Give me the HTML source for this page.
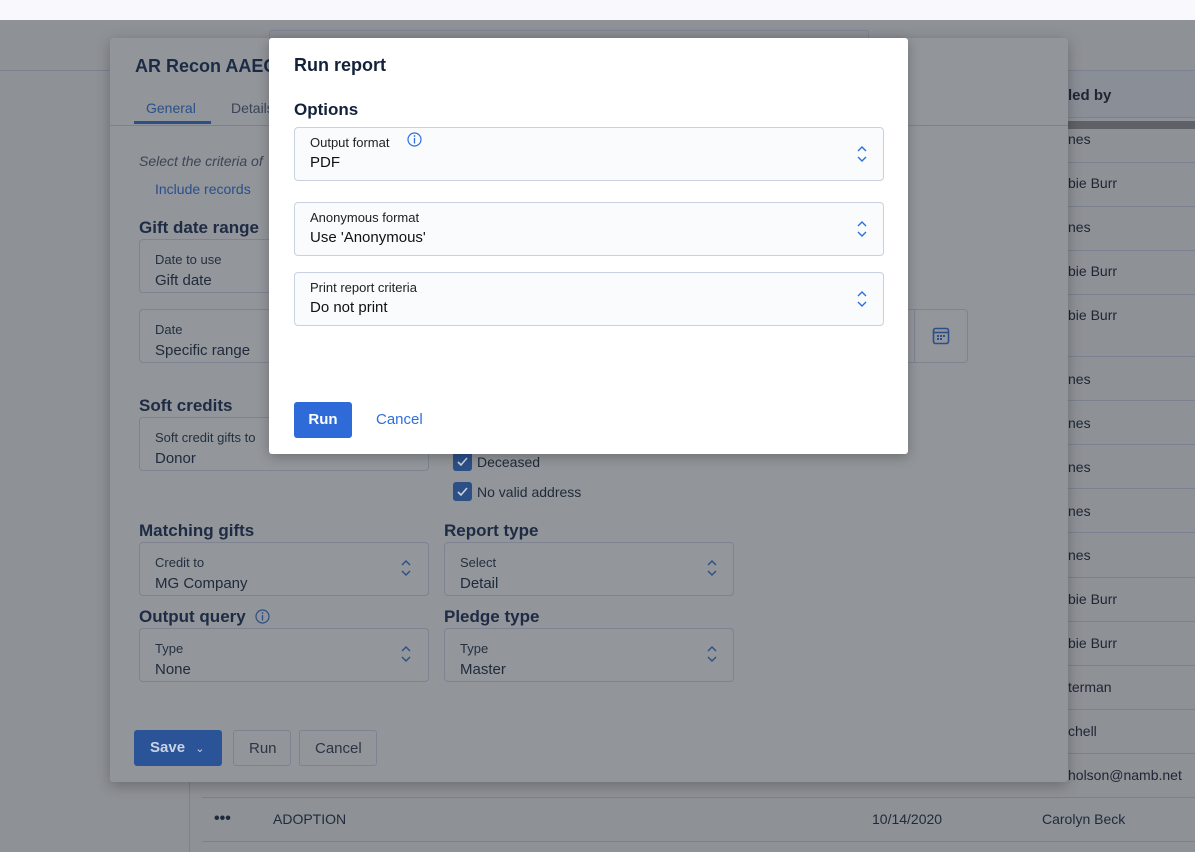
<!DOCTYPE html>
<html><head><meta charset="utf-8"><style>
*{box-sizing:border-box;margin:0;padding:0}
body{width:1195px;height:852px;overflow:hidden;background:#8e9196;font-family:"Liberation Sans",sans-serif;position:relative;color:#1f2a3a}
.a{position:absolute}
.top{left:0;top:0;width:1195px;height:20px;background:#f8f8fd}
.hl{height:1px;background:#7b8190}
.panel{left:110px;top:38px;width:958px;height:744px;background:#929599;border-radius:3px;box-shadow:0 4px 14px rgba(0,0,0,.25)}
.fld{position:absolute;border:1px solid #7d8391;border-radius:4px;background:#93969b}
.fld .l{position:absolute;left:15px;top:12px;font-size:13px;color:#24303f}
.fld .v{position:absolute;left:15px;top:32px;font-size:15px;color:#1f2a3a}
.h{position:absolute;font-size:17px;font-weight:bold;color:#1e2b44}
.chev{position:absolute;width:12px;height:18px}
.cb{position:absolute;width:19px;height:19px;background:#2c4f86;border-radius:3px}
.mod{left:269px;top:38px;width:639px;height:416px;background:#fff;border-radius:3px;box-shadow:0 3px 12px rgba(0,0,0,.25)}
.mf{position:absolute;left:25px;width:590px;height:54px;border:1px solid #c9d0df;border-radius:4px;background:#fafbfd}
.mf .l{position:absolute;left:15px;top:7px;font-size:13px;color:#222}
.mf .v{position:absolute;left:15px;top:26px;font-size:15px;color:#111}
.row{position:absolute;left:1068px;font-size:14px;color:#1e2533}
</style></head><body>
<div class="a top"></div>
<div class="a hl" style="left:0;top:70px;width:110px"></div>
<div class="a" style="left:269px;top:30px;width:600px;height:10px;background:#8c9095;border:1px solid #7d8391;border-radius:3px"></div>
<!-- right table -->
<div class="a" style="left:1068px;top:70px;width:127px;height:48px;background:#8a8e96;border-top:1px solid #7b8190;border-bottom:1px solid #7b8190"></div>
<div class="row" style="top:87px;font-weight:bold;font-size:15px">led by</div>
<div class="a" style="left:1068px;top:121px;width:127px;height:8px;background:#5e6167"></div>
<div class="a" style="left:189px;top:782px;width:1px;height:70px;background:#7b8190"></div>
<div class="a hl" style="left:202px;top:797px;width:993px"></div>
<div class="a hl" style="left:202px;top:841px;width:993px"></div>
<div class="a" style="left:214px;top:810px;font-size:16px;font-weight:bold">•••</div>
<div class="a" style="left:273px;top:811px;font-size:14px">ADOPTION</div>
<div class="a" style="left:872px;top:811px;font-size:14px">10/14/2020</div>
<div class="a" style="left:1042px;top:811px;font-size:14px">Carolyn Beck</div>
<div class="row" style="top:131px">nes</div><div class="a hl" style="left:1068px;top:162px;width:127px"></div>
<div class="row" style="top:175px">bie Burr</div><div class="a hl" style="left:1068px;top:206px;width:127px"></div>
<div class="row" style="top:219px">nes</div><div class="a hl" style="left:1068px;top:250px;width:127px"></div>
<div class="row" style="top:263px">bie Burr</div><div class="a hl" style="left:1068px;top:294px;width:127px"></div>
<div class="row" style="top:307px">bie Burr</div><div class="a hl" style="left:1068px;top:356px;width:127px"></div>
<div class="row" style="top:371px">nes</div><div class="a hl" style="left:1068px;top:400px;width:127px"></div>
<div class="row" style="top:415px">nes</div><div class="a hl" style="left:1068px;top:444px;width:127px"></div>
<div class="row" style="top:459px">nes</div><div class="a hl" style="left:1068px;top:488px;width:127px"></div>
<div class="row" style="top:503px">nes</div><div class="a hl" style="left:1068px;top:532px;width:127px"></div>
<div class="row" style="top:547px">nes</div><div class="a hl" style="left:1068px;top:577px;width:127px"></div>
<div class="row" style="top:591px">bie Burr</div><div class="a hl" style="left:1068px;top:621px;width:127px"></div>
<div class="row" style="top:635px">bie Burr</div><div class="a hl" style="left:1068px;top:665px;width:127px"></div>
<div class="row" style="top:679px">terman</div><div class="a hl" style="left:1068px;top:709px;width:127px"></div>
<div class="row" style="top:723px">chell</div><div class="a hl" style="left:1068px;top:753px;width:127px"></div>
<div class="row" style="top:767px">holson@namb.net</div>

<div class="a panel">
 <div class="a" style="left:25px;top:18px;font-size:18px;font-weight:bold;color:#1c2b45">AR Recon AAEO</div>
 <div class="a" style="left:36px;top:62px;font-size:14px;color:#2a4f8c">General</div>
 <div class="a" style="left:121px;top:62px;font-size:14px;color:#3a4558">Details</div>
 <div class="a" style="left:24px;top:83px;width:77px;height:3px;background:#2c4f86"></div>
 <div class="a hl" style="left:0;top:87px;width:958px"></div>
 <div class="a" style="left:29px;top:115px;font-size:14px;font-style:italic;color:#3c4556">Select the criteria of</div>
 <div class="a" style="left:45px;top:143px;font-size:14px;color:#2a4f8c">Include records</div>
 <div class="h" style="left:29px;top:180px">Gift date range</div>
 <div class="fld" style="left:29px;top:201px;width:290px;height:54px"><div class="l">Date to use</div><div class="v">Gift date</div></div>
 <div class="fld" style="left:29px;top:271px;width:290px;height:54px"><div class="l">Date</div><div class="v">Specific range</div></div>
 <div class="fld" style="left:735px;top:271px;width:123px;height:54px;border-left:none;border-radius:0 4px 4px 0"></div>
 <div class="a" style="left:804px;top:272px;width:1px;height:52px;background:#7d8391"></div>
 <svg class="a" style="left:822px;top:289px" width="18" height="18" viewBox="0 0 18 18"><rect x="1.5" y="1.5" width="15" height="15" rx="2" fill="none" stroke="#2c4f86" stroke-width="1.6"/><line x1="1.5" y1="5.5" x2="16.5" y2="5.5" stroke="#2c4f86" stroke-width="1.6"/><g fill="#2c4f86"><rect x="5" y="8" width="2" height="2"/><rect x="8" y="8" width="2" height="2"/><rect x="11" y="8" width="2" height="2"/><rect x="5" y="11" width="2" height="2"/><rect x="8" y="11" width="2" height="2"/></g></svg>
 <div class="h" style="left:29px;top:358px">Soft credits</div>
 <div class="fld" style="left:29px;top:379px;width:290px;height:54px"><div class="l">Soft credit gifts to</div><div class="v">Donor</div></div>
 <div class="cb" style="left:343px;top:414px"></div><svg class="a" style="left:346px;top:418px" width="13" height="11"><path d="M2 6l3 3 6-7" fill="none" stroke="#cdd3df" stroke-width="1.6"/></svg>
 <div class="a" style="left:367px;top:416px;font-size:14px">Deceased</div>
 <div class="cb" style="left:343px;top:444px"></div><svg class="a" style="left:346px;top:448px" width="13" height="11"><path d="M2 6l3 3 6-7" fill="none" stroke="#cdd3df" stroke-width="1.6"/></svg>
 <div class="a" style="left:367px;top:446px;font-size:14px">No valid address</div>
 <div class="h" style="left:29px;top:483px">Matching gifts</div>
 <div class="fld" style="left:29px;top:504px;width:290px;height:54px"><div class="l">Credit to</div><div class="v">MG Company</div></div>
 <div class="h" style="left:334px;top:483px">Report type</div>
 <div class="fld" style="left:334px;top:504px;width:290px;height:54px"><div class="l">Select</div><div class="v">Detail</div></div>
 <div class="h" style="left:29px;top:569px">Output query</div>
 <svg class="a" style="left:145px;top:571px" width="15" height="15"><circle cx="7.5" cy="7.5" r="6.5" fill="none" stroke="#2c4f86" stroke-width="1.2"/><line x1="7.5" y1="6" x2="7.5" y2="11.5" stroke="#2c4f86" stroke-width="1.3"/><circle cx="7.5" cy="4" r=".9" fill="#2c4f86"/></svg>
 <div class="fld" style="left:29px;top:590px;width:290px;height:54px"><div class="l">Type</div><div class="v">None</div></div>
 <div class="h" style="left:334px;top:569px">Pledge type</div>
 <div class="fld" style="left:334px;top:590px;width:290px;height:54px"><div class="l">Type</div><div class="v">Master</div></div>
 <svg class="chev" style="left:290px;top:521px" viewBox="0 0 12 18"><path d="M2 6l4-4 4 4M2 12l4 4 4-4" fill="none" stroke="#2c4f86" stroke-width="1.4"/></svg>
 <svg class="chev" style="left:596px;top:521px" viewBox="0 0 12 18"><path d="M2 6l4-4 4 4M2 12l4 4 4-4" fill="none" stroke="#2c4f86" stroke-width="1.4"/></svg>
 <svg class="chev" style="left:290px;top:607px" viewBox="0 0 12 18"><path d="M2 6l4-4 4 4M2 12l4 4 4-4" fill="none" stroke="#2c4f86" stroke-width="1.4"/></svg>
 <svg class="chev" style="left:596px;top:607px" viewBox="0 0 12 18"><path d="M2 6l4-4 4 4M2 12l4 4 4-4" fill="none" stroke="#2c4f86" stroke-width="1.4"/></svg>
 <div class="a" style="left:24px;top:692px;width:88px;height:36px;background:#2b5498;border-radius:3px;color:#c9d3e4;font-size:15px;font-weight:bold;padding:9px 0 0 16px">Save <span style="font-weight:normal;font-size:11px;margin-left:6px">&#8964;</span></div>
 <div class="a" style="left:123px;top:692px;width:58px;height:36px;border:1px solid #7d8391;border-radius:3px;font-size:15px;padding:9px 0 0 15px;color:#2c3544">Run</div>
 <div class="a" style="left:189px;top:692px;width:78px;height:36px;border:1px solid #7d8391;border-radius:3px;font-size:15px;padding:9px 0 0 15px;color:#2c3544">Cancel</div>
</div>

<div class="a mod">
 <div class="a" style="left:25px;top:17px;font-size:18px;font-weight:bold;color:#13213b">Run report</div>
 <div class="a" style="left:25px;top:62px;font-size:17px;font-weight:bold;color:#13213b">Options</div>
 <div class="mf" style="top:89px"><div class="l">Output format</div><div class="v">PDF</div>
  <svg class="a" style="left:112px;top:4px" width="15" height="15"><circle cx="7.5" cy="7.5" r="6.5" fill="none" stroke="#2e6fdc" stroke-width="1.2"/><line x1="7.5" y1="6" x2="7.5" y2="11.5" stroke="#2e6fdc" stroke-width="1.3"/><circle cx="7.5" cy="4" r=".9" fill="#2e6fdc"/></svg>
  <svg class="chev" style="left:561px;top:17px" viewBox="0 0 12 18"><path d="M2 6l4-4 4 4M2 12l4 4 4-4" fill="none" stroke="#2e6fdc" stroke-width="1.4"/></svg></div>
 <div class="mf" style="top:164px"><div class="l">Anonymous format</div><div class="v">Use 'Anonymous'</div>
  <svg class="chev" style="left:561px;top:17px" viewBox="0 0 12 18"><path d="M2 6l4-4 4 4M2 12l4 4 4-4" fill="none" stroke="#2e6fdc" stroke-width="1.4"/></svg></div>
 <div class="mf" style="top:234px"><div class="l">Print report criteria</div><div class="v">Do not print</div>
  <svg class="chev" style="left:561px;top:17px" viewBox="0 0 12 18"><path d="M2 6l4-4 4 4M2 12l4 4 4-4" fill="none" stroke="#2e6fdc" stroke-width="1.4"/></svg></div>
 <div class="a" style="left:25px;top:364px;width:58px;height:36px;background:#2e6bd9;border-radius:3px;color:#fff;font-size:15px;font-weight:bold;text-align:center;line-height:36px">Run</div>
 <div class="a" style="left:107px;top:373px;font-size:15px;color:#2e6fdc">Cancel</div>
</div>
</body></html>
